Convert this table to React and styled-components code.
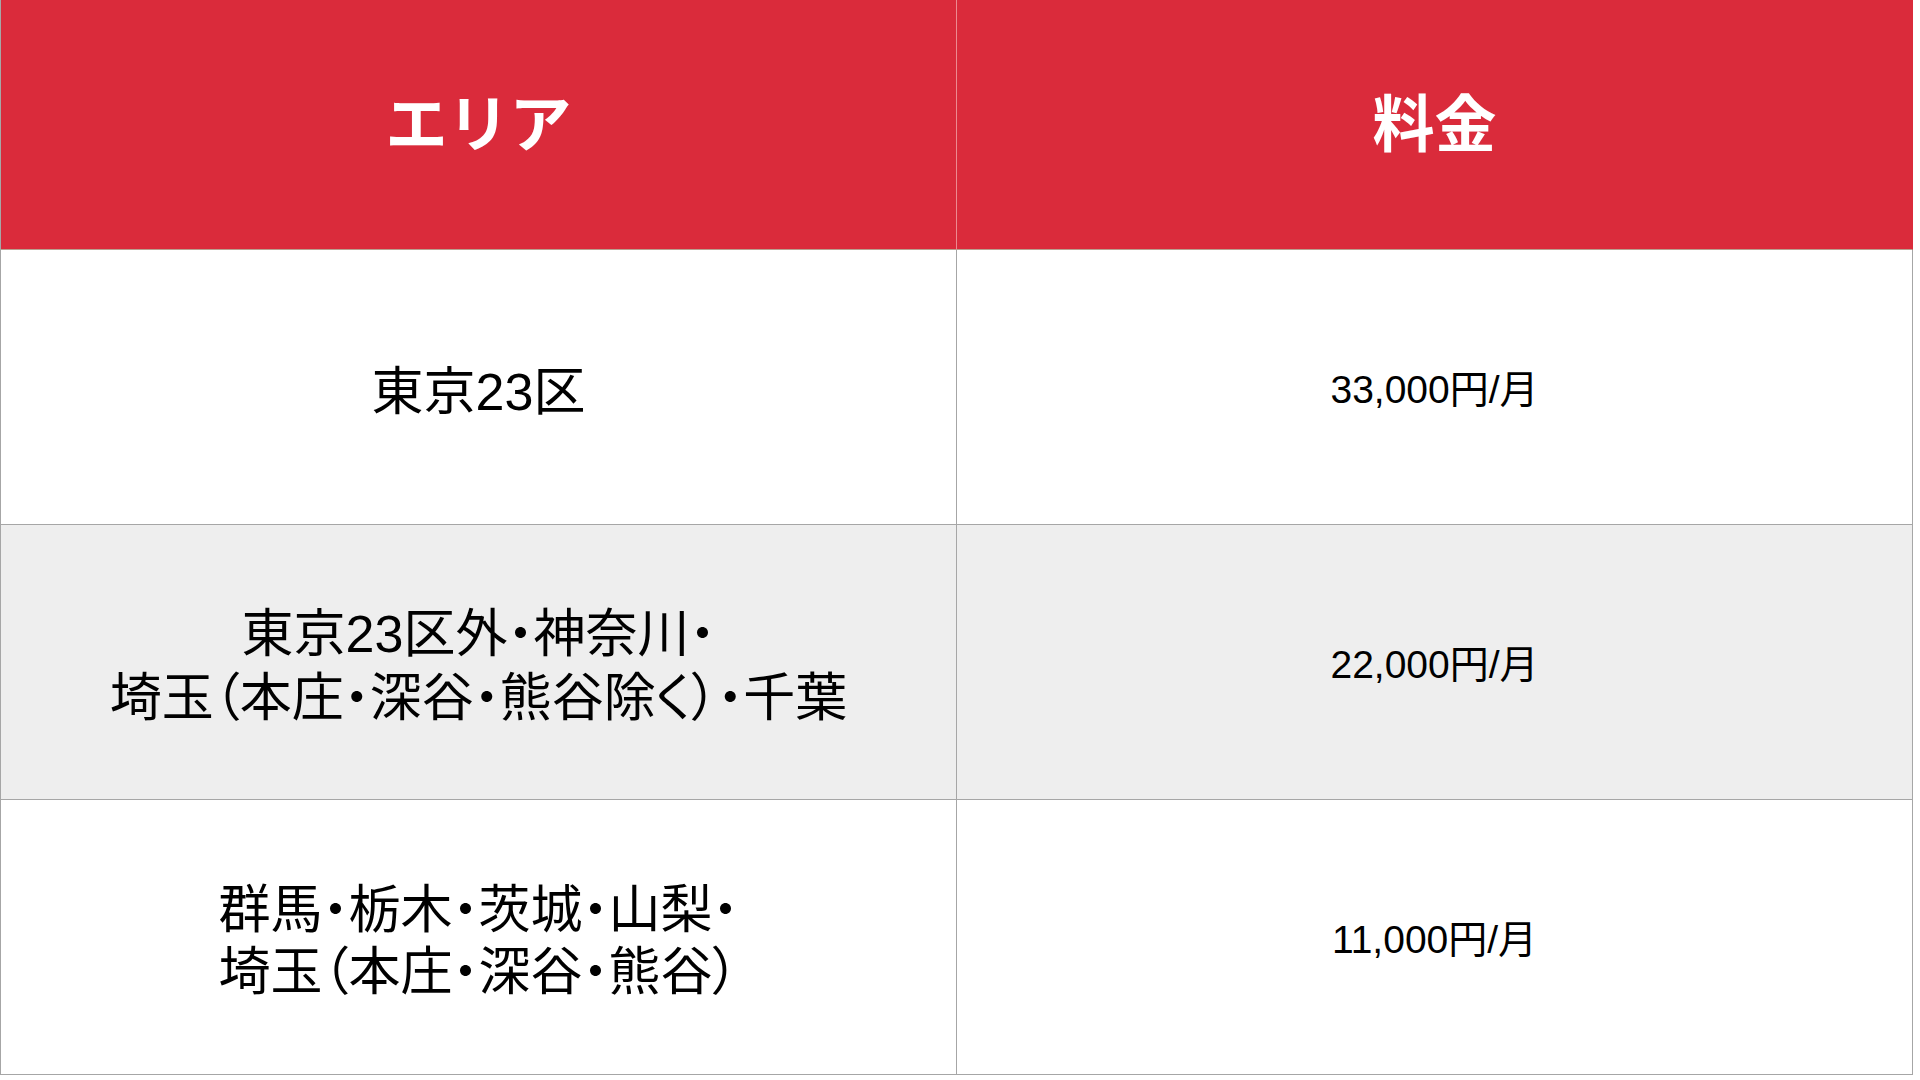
import React from "react";
import styled, { createGlobalStyle } from "styled-components";

const Global = createGlobalStyle`
  html, body { margin: 0; padding: 0; background: #ffffff; }
  body { font-family: "Noto Sans CJK JP", "Noto Sans", sans-serif; }
`;

const Table = styled.div`
  display: grid;
  grid-template-columns: 956px 956px;
  grid-template-rows: 250px repeat(3, 275px);
  width: 1913px;
  border-left: 1px solid #a6a6a6;
  box-sizing: border-box;
`;

const HeadCell = styled.div`
  display: flex;
  align-items: center;
  justify-content: center;
  background: #da2b3b;
  color: #ffffff;
  font-family: "Noto Sans CJK JP", sans-serif;
  font-weight: 700;
  font-size: 62px;
  line-height: 1;
  border-right: 1px solid ${(p) => (p.$last ? "#da2b3b" : "#ec8a90")};
  border-bottom: 1px solid #b9a08f;
  padding-bottom: 10px;
  box-sizing: border-box;
`;

const Cell = styled.div`
  display: flex;
  align-items: center;
  justify-content: center;
  text-align: center;
  background: ${(p) => (p.$shaded ? "#eeeeee" : "#ffffff")};
  border-right: 1px solid #a6a6a6;
  border-bottom: 1px solid #a6a6a6;
  color: #000000;
`;

const AreaText = styled.div`
  display: flex;
  flex-direction: column;
  align-items: center;
  font-family: "Noto Sans CJK JP", sans-serif;
  font-size: 52px;
  font-feature-settings: "palt";
  padding-top: ${(p) => (p.$single ? "2px" : "0")};
`;

const Line = styled.div`
  height: ${(p) => p.$h}px;
  line-height: ${(p) => p.$h}px;
  white-space: nowrap;
`;

const Digits = styled.span`
  font-family: "Liberation Sans", Arial, sans-serif;
  line-height: 1;
`;

const Price = styled.div`
  font-family: "Liberation Sans", "Noto Sans CJK JP", sans-serif;
  font-size: 39px;
  line-height: 48px;
  padding-top: 6px;
`;

const rows = [
  { area: [<><span>東京</span><Digits>23</Digits><span>区</span></>], price: "33,000円/月", lh: 64 },
  {
    area: [
      <><span>東京</span><Digits>23</Digits><span>区外・神奈川・</span></>,
      <>埼玉（本庄・深谷・熊谷除く）・千葉</>,
    ],
    price: "22,000円/月",
    shaded: true,
    lh: 64,
  },
  {
    area: [<>群馬・栃木・茨城・山梨・</>, <>埼玉（本庄・深谷・熊谷）</>],
    price: "11,000円/月",
    lh: 62,
  },
];

export default function App() {
  return (
    <>
      <Global />
      <Table>
        <HeadCell>エリア</HeadCell>
        <HeadCell $last>料金</HeadCell>
        {rows.map((r, i) => (
          <React.Fragment key={i}>
            <Cell $shaded={r.shaded}>
              <AreaText $single={r.area.length === 1}>
                {r.area.map((l, j) => (
                  <Line key={j} $h={r.lh}>{l}</Line>
                ))}
              </AreaText>
            </Cell>
            <Cell $shaded={r.shaded}>
              <Price>{r.price}</Price>
            </Cell>
          </React.Fragment>
        ))}
      </Table>
    </>
  );
}
